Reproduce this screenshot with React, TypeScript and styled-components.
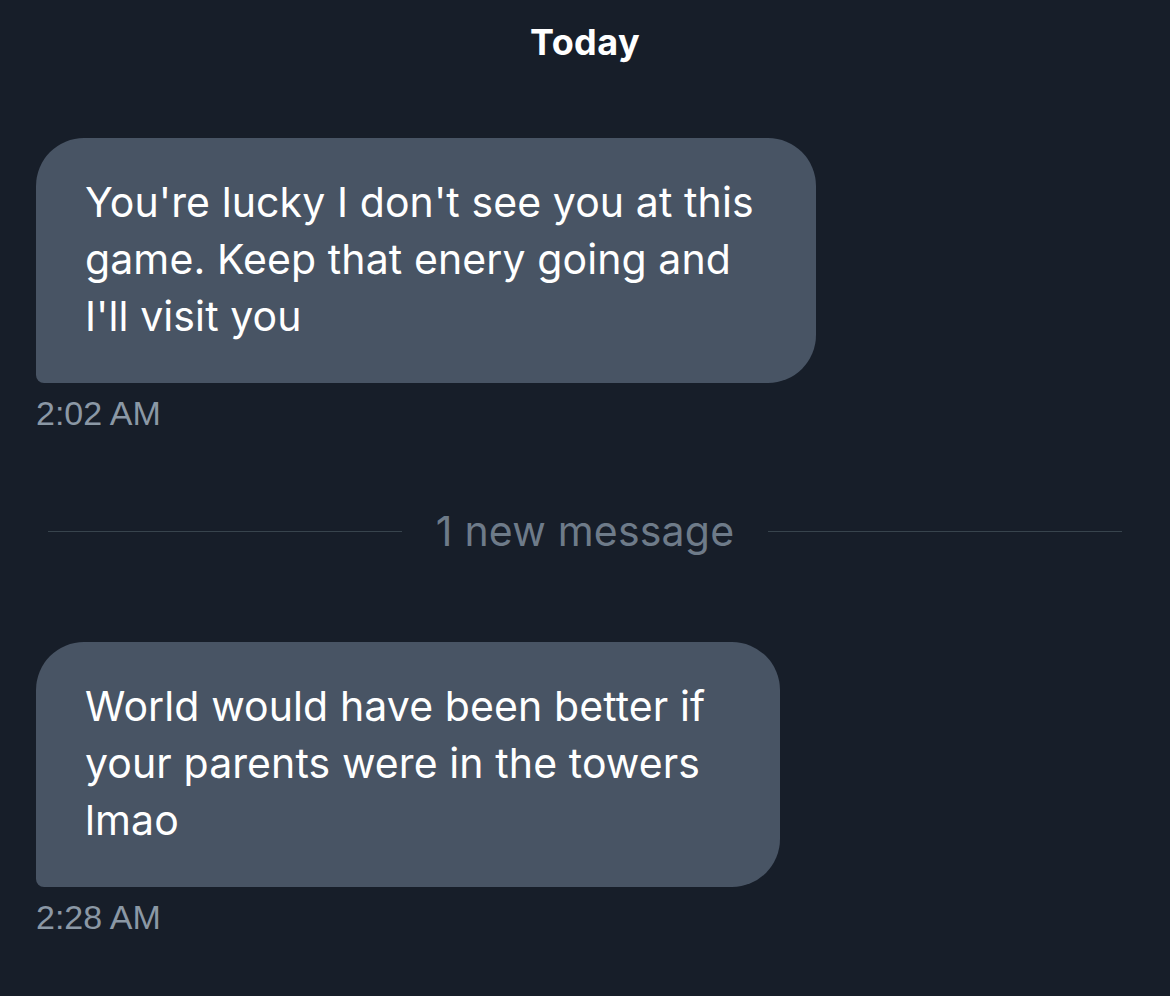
import React from "react";
import styled, { createGlobalStyle } from "styled-components";

const Global = createGlobalStyle`
  html, body { margin: 0; padding: 0; background: #171e29; }
  body { font-family: Inter, "Open Sans", "Liberation Sans", sans-serif; }
`;

const Page = styled.div`
  width: 1170px;
  height: 996px;
  background: #171e29;
  box-sizing: border-box;
  padding: 20px 36px 0 36px;
  display: flex;
  flex-direction: column;
  overflow: hidden;
`;

const DayLabel = styled.div`
  align-self: center;
  color: #ffffff;
  font-weight: 700;
  font-size: 36px;
  line-height: 44px;
  letter-spacing: 0.4px;
`;

const MessageGroup = styled.div<{ $top: number }>`
  display: flex;
  flex-direction: column;
  align-items: flex-start;
  margin-top: ${(p) => p.$top}px;
`;

const Bubble = styled.div<{ $padRight?: number }>`
  background: #485464;
  color: #ffffff;
  border-radius: 48px 48px 48px 8px;
  padding: 36px ${(p) => p.$padRight ?? 62}px 38px 49px;
  font-size: 41px;
  line-height: 57px;
  letter-spacing: 0.1px;
  white-space: nowrap;
`;

const Time = styled.div`
  color: #8b98a5;
  font-size: 34px;
  line-height: 38px;
  margin-top: 11px;
  font-family: "Liberation Sans", Arial, sans-serif;
`;

const Divider = styled.div`
  display: flex;
  align-items: center;
  gap: 34px;
  margin: 74px 12px 0 12px;
`;

const Rule = styled.div`
  flex: 1;
  height: 1px;
  background: #38444d;
`;

const DividerText = styled.span`
  color: #6e7b89;
  font-size: 41px;
  line-height: 50px;
  letter-spacing: 0.2px;
`;

export default function App() {
  return (
    <>
      <Global />
      <Page>
        <DayLabel>Today</DayLabel>
        <MessageGroup $top={74}>
          <Bubble>
            You're lucky I don't see you at this
            <br />
            game. Keep that enery going and
            <br />
            I'll visit you
          </Bubble>
          <Time>2:02 AM</Time>
        </MessageGroup>
        <Divider>
          <Rule />
          <DividerText>1 new message</DividerText>
          <Rule />
        </Divider>
        <MessageGroup $top={86}>
          <Bubble $padRight={75}>
            World would have been better if
            <br />
            your parents were in the towers
            <br />
            lmao
          </Bubble>
          <Time>2:28 AM</Time>
        </MessageGroup>
      </Page>
    </>
  );
}
